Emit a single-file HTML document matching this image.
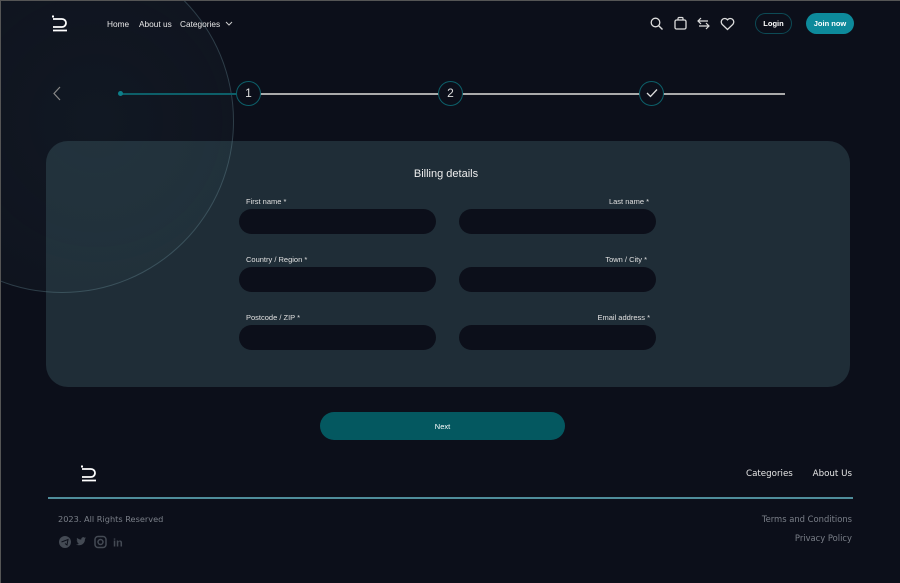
<!DOCTYPE html>
<html><head><style>
*{margin:0;padding:0;box-sizing:border-box}
body{width:900px;height:583px;background:#0c0f1a;font-family:"Liberation Sans",sans-serif;position:relative;overflow:hidden}
.a{position:absolute}
.nav{font-size:8.3px;color:#e8e8e8}
.card{left:46px;top:141px;width:804px;height:246px;background:#1f2d37;border-radius:22px}
.lab{font-size:7.5px;color:#e0e0e0}
.in{width:197px;height:25px;background:#0c0f1a;border-radius:13px}
.step{width:25px;height:25px;border:1.5px solid #0d5f69;border-radius:50%;color:#ddd;font-size:12px;text-align:center;line-height:22px;background:#0c0f1a}
.ft{font-family:"DejaVu Sans",sans-serif}
</style></head><body>
<div class="a card"></div>
<div class="a" style="left:-110px;top:-51px;width:344px;height:344px;border-radius:50%;border:1.5px solid rgba(120,160,170,0.3);background:radial-gradient(circle at 60% 50%,rgba(70,110,120,0.1),rgba(70,110,120,0.03))"></div>
<div class="a" style="left:0;top:0;width:1px;height:583px;background:#555"></div>
<div class="a" style="left:0;top:0;width:900px;height:1px;background:#555"></div>
<!-- logo -->
<svg class="a" style="left:52px;top:15px" width="16" height="17" viewBox="0 0 16 17"><path d="M1 4H10a4 4 0 0 1 0 8H1M1 15.5H15" fill="none" stroke="#fff" stroke-width="1.8"/><rect x="0" y="0.5" width="2" height="2" fill="#fff"/></svg>
<div class="a nav" style="left:107px;top:19px">Home</div>
<div class="a nav" style="left:139px;top:19px">About us</div>
<div class="a nav" style="left:180px;top:19px">Categories</div>
<svg class="a" style="left:225px;top:21px" width="8" height="6"><path d="M1 1L4 4L7 1" fill="none" stroke="#ccc" stroke-width="1"/></svg>
<!-- icons -->
<svg class="a" style="left:650px;top:17px" width="14" height="14"><circle cx="5.5" cy="5.5" r="4.3" fill="none" stroke="#ddd" stroke-width="1.3"/><path d="M8.7 8.7L12.5 12.5" stroke="#ddd" stroke-width="1.4"/></svg>
<svg class="a" style="left:674px;top:16px" width="13" height="14"><rect x="1" y="4" width="11" height="9" rx="1.5" fill="none" stroke="#ddd" stroke-width="1.3"/><path d="M4 4V2.5a1 1 0 0 1 1-1h3a1 1 0 0 1 1 1V4" fill="none" stroke="#ddd" stroke-width="1.2"/></svg>
<svg class="a" style="left:697px;top:17px" width="13" height="13"><path d="M1 4H11M4 1L1 4L4 7M12 9H2M9 6L12 9L9 12" fill="none" stroke="#ddd" stroke-width="1.2"/></svg>
<svg class="a" style="left:720px;top:17px" width="15" height="14"><path d="M7.5 12.5L2 7.2A3.2 3.2 0 0 1 7.5 2.8A3.2 3.2 0 0 1 13 7.2Z" fill="none" stroke="#ddd" stroke-width="1.3"/></svg>
<div class="a" style="left:755px;top:13px;width:37px;height:21px;border:1.5px solid #0d4a55;border-radius:11px;color:#fff;font-size:7.5px;font-weight:bold;text-align:center;line-height:19px">Login</div>
<div class="a" style="left:806px;top:13px;width:48px;height:21px;background:#0d8a9b;border-radius:11px;color:#fff;font-size:7.5px;font-weight:bold;text-align:center;line-height:22px">Join now</div>
<!-- stepper -->
<svg class="a" style="left:52px;top:86px" width="10" height="15"><path d="M8 1L2 7.5L8 14" fill="none" stroke="#888" stroke-width="1.2"/></svg>
<div class="a" style="left:120px;top:93px;width:130px;height:1.5px;background:#0d5f69"></div>
<div class="a" style="left:118px;top:91px;width:5px;height:5px;border-radius:50%;background:#0d7f8a"></div>
<div class="a" style="left:250px;top:93px;width:535px;height:1.5px;background:#aaa"></div>
<div class="a step" style="left:236px;top:81px">1</div>
<div class="a step" style="left:438px;top:81px">2</div>
<div class="a step" style="left:639px;top:81px"><svg width="12" height="10" style="margin-top:6px"><path d="M1 5L4.5 8.5L11 1.5" fill="none" stroke="#ddd" stroke-width="1.3"/></svg></div>
<!-- form -->
<div class="a" style="left:0;width:892px;top:168px;text-align:center;font-size:11px;color:#eee">Billing details</div>
<div class="a lab" style="left:246px;top:197px">First name *</div>
<div class="a lab" style="left:560px;width:89px;text-align:right;top:197px">Last name *</div>
<div class="a in" style="left:239px;top:209px"></div><div class="a in" style="left:459px;top:209px"></div>
<div class="a lab" style="left:246px;top:255px">Country / Region *</div>
<div class="a lab" style="left:560px;width:87px;text-align:right;top:255px">Town / City *</div>
<div class="a in" style="left:239px;top:267px"></div><div class="a in" style="left:459px;top:267px"></div>
<div class="a lab" style="left:246px;top:313px">Postcode / ZIP *</div>
<div class="a lab" style="left:560px;width:90px;text-align:right;top:313px">Email address *</div>
<div class="a in" style="left:239px;top:325px"></div><div class="a in" style="left:459px;top:325px"></div>
<div class="a" style="left:320px;top:412px;width:245px;height:28px;background:#045860;border-radius:14px;color:#fff;font-size:7.5px;text-align:center;line-height:29px">Next</div>
<!-- footer -->
<svg class="a" style="left:81px;top:465px" width="16" height="17" viewBox="0 0 16 17"><path d="M1 4H10a4 4 0 0 1 0 8H1M1 15.5H15" fill="none" stroke="#fff" stroke-width="1.8"/><rect x="0" y="0.5" width="2" height="2" fill="#fff"/></svg>
<div class="a ft" style="left:746px;top:469px;font-size:8.7px;color:#e6e6e6">Categories</div>
<div class="a ft" style="right:48px;top:469px;font-size:8.7px;color:#e6e6e6">About Us</div>
<div class="a" style="left:48px;top:497px;width:805px;height:1.5px;background:#4f8d9b"></div>
<div class="a ft" style="left:58px;top:514px;font-size:8.2px;color:#7a7f88">2023. All Rights Reserved</div>
<div class="a ft" style="right:48px;top:514px;font-size:8.4px;color:#7a7f88">Terms and Conditions</div>
<div class="a ft" style="right:48px;top:533px;font-size:8.4px;color:#7a7f88">Privacy Policy</div>
<svg class="a" style="left:58px;top:535px" width="70" height="14"><circle cx="7" cy="7" r="6" fill="#444a54"/><path d="M3.5 7L10 4.5L9 10L7 8.5" fill="none" stroke="#0c0f1a" stroke-width="1"/><path d="M19 10c4 1 8-1 8-6l1-1.5-1.3.3a2 2 0 0 0-3.4 1.7C21 4.6 20 3.5 19 3c-.5 1 0 2 .7 2.5-.5 0-1-.2-1-.2 0 1 .7 1.8 1.5 2-.4.1-.8.1-1 0 .3.8 1 1.3 1.8 1.3-.8.7-2 1-3 .9z" fill="#444a54"/><rect x="37" y="1.5" width="11" height="11" rx="3" fill="none" stroke="#444a54" stroke-width="1.5"/><circle cx="42.5" cy="7" r="2.5" fill="none" stroke="#444a54" stroke-width="1.5"/><text x="55" y="11.5" font-size="11" font-weight="bold" fill="#444a54" font-family="Liberation Sans">in</text></svg>
</body></html>
